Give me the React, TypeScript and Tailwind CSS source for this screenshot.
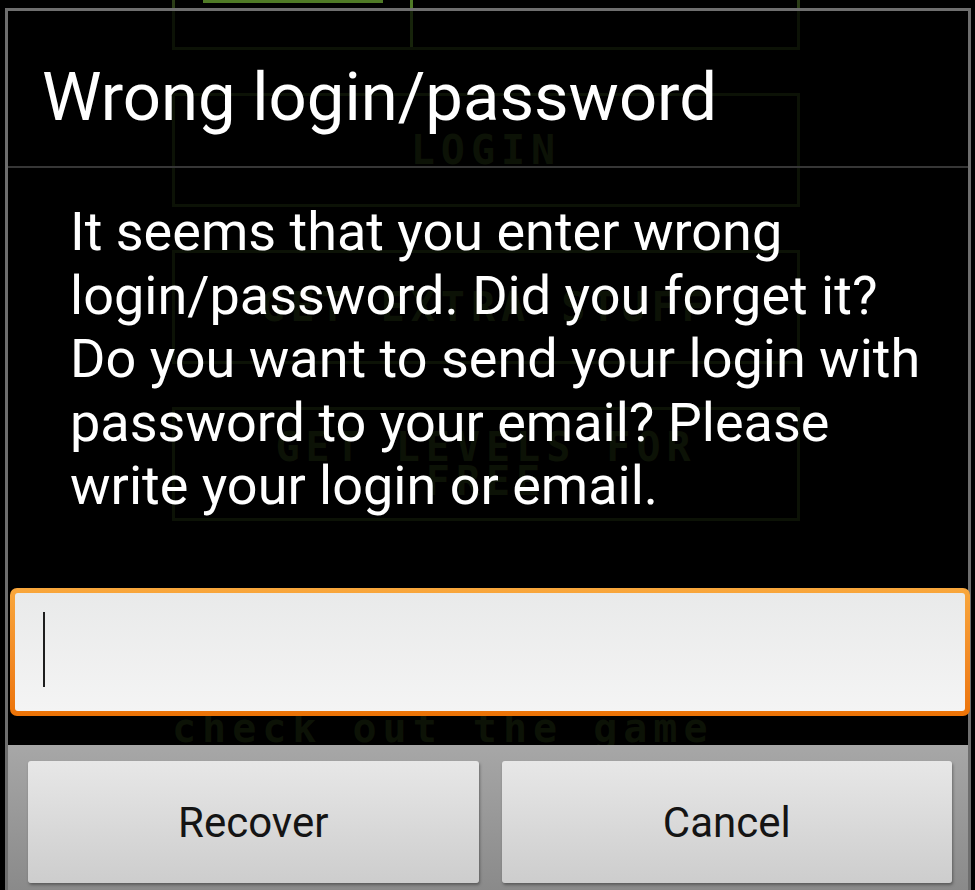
export default function App() {
  return (
    <div className="relative h-[890px] w-[975px] overflow-hidden bg-black">
      {/* game menu behind the dialog */}
      <div className="ml-[172px] flex w-[628px] flex-col gap-[43px] font-['DejaVu_Sans_Mono',monospace] font-bold text-[#2a3c16]">
        <div className="flex h-[50px] border-x-[3px] border-b-[3px] border-[#2a3c16]">
          <div className="w-[238px] border-r-[3px] border-[#4f7a26]">
            <div className="mx-auto h-[3px] w-[180px] bg-[#4f7a26]" />
          </div>
        </div>
        <div className="flex h-[114px] items-center justify-center border-[3px] border-[#2a3c16] text-[40px] tracking-[6px]">
          LOGIN
        </div>
        <div className="flex h-[114px] items-center justify-center border-[3px] border-[#2a3c16] text-[40px] tracking-[6px]">
          GET EXTRA STUFF
        </div>
        <div className="flex h-[114px] flex-col items-center justify-center border-[3px] border-[#2a3c16] text-[40px] leading-[34px] tracking-[6px]">
          <span>GET LEVELS FOR</span>
          <span>FREE</span>
        </div>
        <div className="mt-[144px] text-[40px] leading-[40px] tracking-[6px]">check out the game</div>
      </div>

      {/* dialog */}
      <div className="absolute bottom-0 left-[5px] top-[8px] flex w-[966px] flex-col border-x-[3px] border-t-[3px] border-[#6e6e6e] bg-black/70 font-[Roboto,sans-serif]">
        <div className="h-[155px] pl-[34px] pt-[46px] text-[67px] leading-[80px] text-white">Wrong login/password</div>
        <div className="h-[2px] bg-[#363636]" />
        <p className="h-[350px] pl-[62px] pr-[22px] pt-[32px] text-[54px] leading-[63.5px] text-white">
          It seems that you enter wrong login/password. Did you forget it? Do you want to send your login with password
          to your email? Please write your login or email.
        </p>
        <div className="ml-[2px] mr-[-2px] mt-[70px] h-[128px] shrink-0 rounded-[7px] bg-gradient-to-b from-[#f9a73c] to-[#ec7306] p-[5px]">
          <div className="h-full rounded-[3px] bg-gradient-to-b from-[#e9eaea] to-[#f4f4f4] pl-[28px] pt-[19px]">
            <div className="h-[75px] w-[2px] bg-[#1e1e1e]" />
          </div>
        </div>
        <div className="mt-[29px] flex flex-1 gap-[23px] bg-gradient-to-b from-[#a7a7a7] to-[#8a8a8a] pl-[20px] pr-[16px] pt-[16px]">
          <button className="flex h-[122px] flex-1 items-center justify-center rounded-[3px] bg-gradient-to-b from-[#e7e7e7] to-[#cdcdcd] text-[42px] text-[#141414] shadow-[1px_2px_3px_rgba(0,0,0,0.35)]">
            Recover
          </button>
          <button className="flex h-[122px] flex-1 items-center justify-center rounded-[3px] bg-gradient-to-b from-[#e7e7e7] to-[#cdcdcd] text-[42px] text-[#141414] shadow-[1px_2px_3px_rgba(0,0,0,0.35)]">
            Cancel
          </button>
        </div>
      </div>
    </div>
  );
}
